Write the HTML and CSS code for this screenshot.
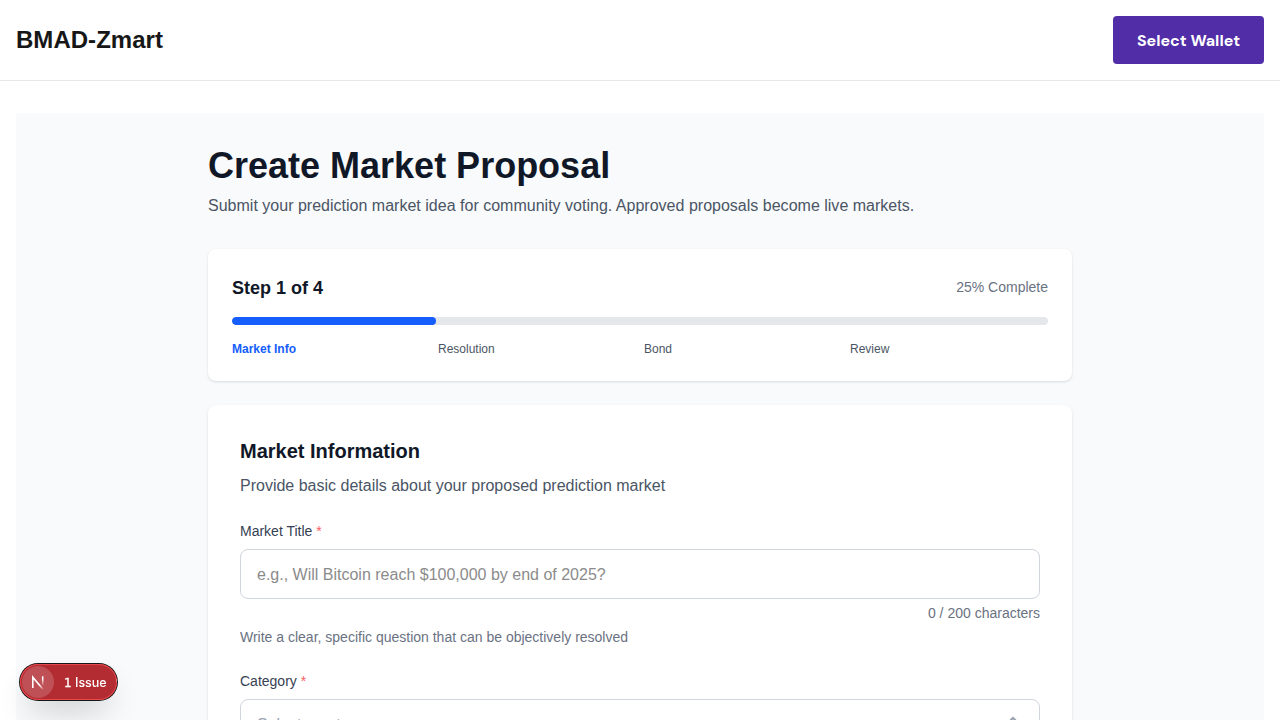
FILE: index.html
```html
<!DOCTYPE html>
<html lang="en">
<head>
<meta charset="utf-8">
<title>BMAD-Zmart</title>
<link rel="stylesheet" href="styles.css">
</head>
<body>
<header class="header">
  <div class="brand">BMAD-Zmart</div>
  <button class="wallet">Select Wallet</button>
</header>
<main class="main">
  <div class="surface">
    <div class="container">
      <h1 class="title">Create Market Proposal</h1>
      <p class="lead">Submit your prediction market idea for community voting. Approved proposals become live markets.</p>
      <section class="card progress">
        <div class="progress-head">
          <h2 class="step">Step 1 of 4</h2>
          <span class="percent">25% Complete</span>
        </div>
        <div class="track"><div class="fill" style="width:25%"></div></div>
        <div class="steps">
          <div class="current">Market Info</div>
          <div>Resolution</div>
          <div>Bond</div>
          <div>Review</div>
        </div>
      </section>
      <section class="card form">
        <h2 class="form-title">Market Information</h2>
        <p class="form-lead">Provide basic details about your proposed prediction market</p>
        <label class="label" for="t">Market Title <span class="req">*</span></label>
        <input class="input" id="t" placeholder="e.g., Will Bitcoin reach $100,000 by end of 2025?">
        <p class="count">0 / 200 characters</p>
        <p class="hint">Write a clear, specific question that can be objectively resolved</p>
        <label class="label">Category <span class="req">*</span></label>
        <button class="select"><span>Select a category</span>
          <svg width="20" height="20" viewBox="0 0 20 20" fill="#99a1af"><path stroke="#99a1af" stroke-width=".8" fill-rule="evenodd" d="M10 3a.75.75 0 01.55.24l3.25 3.5a.75.75 0 11-1.1 1.02L10 4.852 7.3 7.76a.75.75 0 01-1.1-1.02l3.25-3.5A.75.75 0 0110 3zm-3.76 9.2a.75.75 0 011.06.04l2.7 2.908 2.7-2.908a.75.75 0 111.1 1.02l-3.25 3.5a.75.75 0 01-1.1 0l-3.25-3.5a.75.75 0 01.04-1.06z"/></svg>
        </button>
      </section>
    </div>
  </div>
</main>
<div class="issues">
  <span class="mark">
    <svg width="32" height="32" viewBox="0 0 32 32" fill="none">
      <defs>
        <linearGradient id="a" x1="11" y1="11" x2="21.5" y2="23" gradientUnits="userSpaceOnUse"><stop offset=".65" stop-color="#fff"/><stop offset="1" stop-color="#fff" stop-opacity="0.1"/></linearGradient>
        <linearGradient id="b" x1="0" y1="10" x2="0" y2="20" gradientUnits="userSpaceOnUse"><stop offset=".3" stop-color="#fff"/><stop offset="1" stop-color="#fff" stop-opacity="0"/></linearGradient>
      </defs>
      <path d="M10.8 22V11.2L21 23.3" stroke="url(#a)" stroke-width="1.6"/>
      <path d="M20.7 10.2V19.5" stroke="url(#b)" stroke-width="1.5"/>
    </svg>
  </span>
  <span class="issue-text"><span class="issue-count">1</span> Issue</span>
  <span class="sliver"></span>
</div>
</body>
</html>
```
FILE: styles.css
```css
* { box-sizing: border-box; margin: 0; padding: 0; }
body {
  height: 720px;
  overflow: hidden;
  background: #fff;
  color: #171717;
  font: 16px/24px "Liberation Sans", Arial, sans-serif;
}
button, input { font: inherit; }
.header {
  display: flex;
  align-items: center;
  justify-content: space-between;
  height: 81px;
  padding: 0 16px;
  border-bottom: 1px solid #e5e7eb;
}
.brand { font-size: 24px; line-height: 32px; font-weight: 700; letter-spacing: .03px; }
.wallet {
  height: 48px;
  width: 151px;
  padding-top: 2px;
  border: 0;
  border-radius: 4px;
  background: #512da8;
  color: #fff;
  font: 700 16px/46px "DM Sans", "Open Sans", sans-serif;
}
.main { padding: 32px 16px; }
.surface { background: #f9fafb; padding: 33px 0 32px; }
.container { width: 864px; margin: 0 auto; }
.title { color: #101828; font-size: 36px; line-height: 40px; margin-bottom: 8px; }
.lead { color: #4a5565; margin-bottom: 31px; letter-spacing: .01px; }
.card {
  background: #fff;
  border-radius: 8px;
  box-shadow: 0 1px 3px rgba(0,0,0,.1), 0 1px 2px -1px rgba(0,0,0,.1);
}
.progress { padding: 24px; height: 132px; margin-bottom: 24px; }
.progress-head { display: flex; align-items: center; justify-content: space-between; height: 28px; margin-bottom: 16px; }
.step { color: #101828; font-size: 18px; line-height: 28px; padding-top: 2px; }
.percent { color: #6a7282; font-size: 14px; line-height: 20px; }
.track { height: 8px; border-radius: 4px; background: #e5e7eb; overflow: hidden; }
.fill { height: 8px; border-radius: 4px; background: #155dfc; }
.steps { display: grid; grid-template-columns: repeat(4, 1fr); gap: 8px; margin-top: 16px; font-size: 12px; line-height: 16px; color: #4a5565; }
.current { color: #155dfc; font-weight: 700; }
.form { padding: 32px; height: 700px; }
.form-title { color: #101828; font-size: 20px; line-height: 28px; margin-bottom: 9px; }
.form-lead { color: #4a5565; margin-bottom: 23px; }
.label { display: block; color: #364153; font-size: 14px; line-height: 20px; margin-bottom: 8px; }
.req { color: #fb5c63; }
.input, .select {
  display: flex;
  width: 100%;
  height: 50px;
  padding: 0 16px;
  border: 1px solid #d1d5dc;
  border-radius: 8px;
  background: #fff;
}
.input { padding-top: 2px; }
.input::placeholder { color: #8b8b8b; }
.select { align-items: center; justify-content: space-between; color: #99a1af; }
.select span { padding-top: 1px; }
.count { color: #6a7282; font-size: 14px; line-height: 20px; text-align: right; margin-top: 4px; }
.hint { color: #6a7282; font-size: 14px; line-height: 20px; margin: 4px 0 24px; }
.issues {
  position: fixed;
  left: 20px;
  top: 664px;
  display: flex;
  align-items: center;
  width: 97px;
  height: 36px;
  padding-left: 2px;
  border-radius: 18px;
  overflow: hidden;
  background: #b32c32;
  color: #fff;
  box-shadow: inset 0 0 0 1px #e5484d, 0 0 0 1px #171717, 0 16px 32px -8px rgba(0,0,0,.24);
}
.mark { display: flex; width: 32px; height: 32px; border-radius: 50%; background: #bf5156; }
.issue-text { margin-left: 10px; padding-top: 1px; font: 500 12.5px/20px Inter, sans-serif; white-space: nowrap; }
.issue-count { font: 12px/20px "DejaVu Sans", sans-serif; -webkit-text-stroke: .3px #fff; }
.sliver { width: 1px; height: 3px; margin: -4px 0 0 auto; background: #ef8b8e; }
```
